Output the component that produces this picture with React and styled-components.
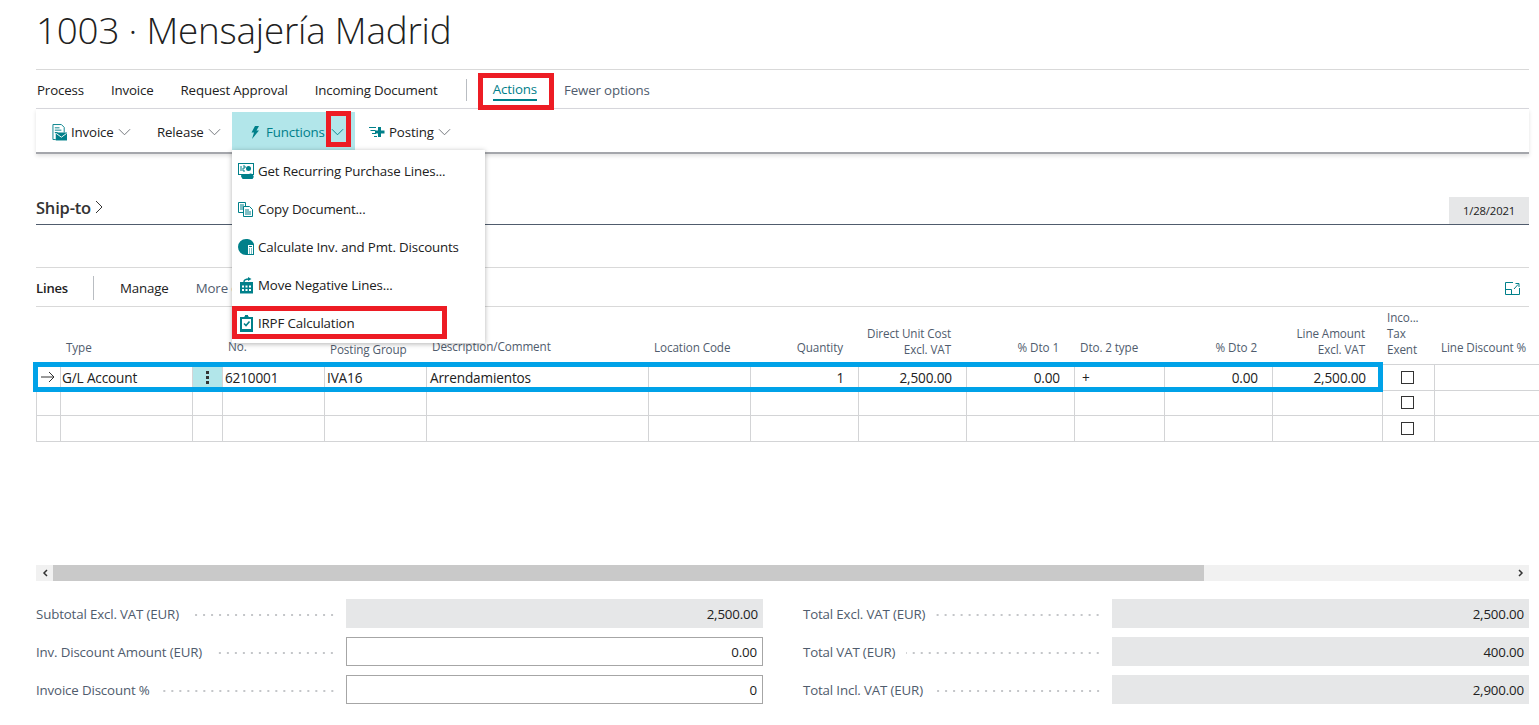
import React from "react";
import styled, { createGlobalStyle } from "styled-components";

const Global = createGlobalStyle`
  html, body { margin: 0; padding: 0; background: #fff; overflow: hidden; }
  body { font-family: "Open Sans", "Noto Sans", "Liberation Sans", sans-serif; color: #212121; }
  * { box-sizing: border-box; }
`;

const Page = styled.div`
  position: relative;
  width: 1539px;
  height: 725px;
  padding: 0 10px 0 36px;
  overflow: hidden;
  font-size: 13.3px;
  letter-spacing: -0.15px;
`;

const TitleBlock = styled.header`
  height: 70px;
  padding-top: 5px;
  border-bottom: 1px solid #d9d9d9;
`;
const Title = styled.h1`
  margin: 0;
  font-size: 36.8px;
  line-height: 50px;
  font-weight: 300;
  letter-spacing: -0.2px;
  color: #212121;
`;

const Tabs = styled.nav`
  display: flex;
  align-items: center;
  height: 39px;
  padding: 2px 0 0 1px;
  border-bottom: 1px solid #d9d9de;
`;
const Tab = styled.span`
  margin-right: ${(p) => p.$mr ?? 27}px;
  color: ${(p) => (p.$muted ? "#505c6d" : "#212121")};
`;
const TabDivider = styled.span`
  width: 1px;
  height: 22px;
  margin: 0 26px 0 0;
  background: #b9bdc2;
`;
const ActiveTab = styled.span`
  margin-right: 27px;
  color: #00808a;
  padding-bottom: 1px;
  border-bottom: 2px solid #00808a;
  line-height: 18px;
`;

const ActionBar = styled.div`
  display: flex;
  align-items: stretch;
  height: 45px;
  padding-top: 3px;
  border-bottom: 2px solid #a4a6ab;
  box-shadow: 0 2px 4px rgba(0, 0, 0, 0.12);
  position: relative;
`;
const ActionItem = styled.div`
  display: flex;
  align-items: center;
  gap: ${(p) => p.$gap || 4}px;
  width: ${(p) => p.$w}px;
  padding-left: ${(p) => p.$pl}px;
  color: ${(p) => (p.$active ? "#00808a" : "#212121")};
  background: ${(p) => (p.$active ? "#b2e6ea" : "transparent")};
`;

const SectionHead = styled.div`
  display: flex;
  justify-content: space-between;
  align-items: flex-end;
  height: 44px;
  margin-top: 27px;
  border-bottom: 1px solid #505c6d;
`;
const SectionTitle = styled.div`
  display: flex;
  align-items: center;
  gap: 4px;
  height: 32px;
  padding-bottom: 2px;
  font-size: 16.5px;
  font-weight: 600;
  letter-spacing: -0.2px;
  color: #333;
`;
const DateBox = styled.div`
  width: 80px;
  height: 27px;
  background: #e6e7e8;
  color: #212121;
  font-size: 11.3px;
  display: flex;
  align-items: center;
  justify-content: center;
`;

const LinesBar = styled.div`
  display: flex;
  align-items: center;
  height: 40px;
  margin-top: 42px;
  padding-top: 2px;
  border-top: 1px solid #d9d9d9;
  border-bottom: 1px solid #d9d9d9;
`;
const LinesTitle = styled.span`
  width: 58px;
  font-weight: 600;
  font-size: 13px;
  color: #212121;
  margin-right: 26px;
  line-height: 24px;
  border-right: 1px solid #b9bdc2;
`;
const LinesLink = styled.span`
  margin-right: 27px;
  color: ${(p) => (p.$muted ? "#505c6d" : "#212121")};
`;
const Spacer = styled.span`flex: 1;`;
const ExpandWrap = styled.span`
  display: flex;
  margin-right: 9px;
`;

const TableGrid = styled.div`
  display: grid;
  width: 1503px;
  grid-template-columns: 25px 132px 30px 102px 102px 222px 102px 108px 108px 108px 90px 108px 110px 52px 1fr;
  grid-template-rows: 57px 26px 25px 27px;
`;
const HeadCell = styled.div`
  display: flex;
  flex-direction: column;
  justify-content: flex-end;
  align-items: ${(p) => (p.$right ? "flex-end" : "flex-start")};
  text-align: ${(p) => (p.$right ? "right" : "left")};
  padding: 0 ${(p) => (p.$right ? p.$pr ?? 16 : 2)}px ${(p) => p.$pb ?? 8}px ${(p) => p.$pl ?? 4}px;
  font-size: 11.7px;
  line-height: 16px;
  letter-spacing: -0.1px;
  color: #505c6d;
  white-space: nowrap;
`;
const Cell = styled.div`
  display: flex;
  align-items: center;
  justify-content: ${(p) => (p.$right ? "flex-end" : p.$center ? "center" : "flex-start")};
  padding: 0 ${(p) => (p.$right ? p.$pr ?? 14 : 2)}px 1px ${(p) => p.$pl ?? 3}px;
  border-right: ${(p) => (p.$last ? "0" : "1px solid #d3d4d6")};
  border-top: 1px solid #d3d4d6;
  border-left: ${(p) => (p.$first ? "1px solid #d3d4d6" : "0")};
  border-bottom: ${(p) => (p.$bottom ? "1px solid #d3d4d6" : "0")};
  background: ${(p) => (p.$tint ? "#b2e6ea" : "transparent")};
  font-size: 13.6px;
  color: #212121;
`;
const Check = styled.span`
  width: 13px;
  height: 13px;
  border: 1px solid #333;
  display: block;
`;

const ScrollBar = styled.div`
  display: flex;
  align-items: center;
  height: 16px;
  margin-top: 123px;
  background: #f1f1f1;
`;
const ScrollArrow = styled.span`
  width: 17px;
  height: 16px;
  display: flex;
  align-items: center;
  justify-content: center;
`;
const ScrollThumb = styled.span`
  width: 1151px;
  height: 16px;
  background: #c9c9c9;
`;

const Totals = styled.section`
  display: grid;
  grid-template-columns: 727px 726px;
  column-gap: 40px;
  row-gap: 9px;
  margin-top: 18px;
`;
const Field = styled.div`
  display: flex;
  height: 29px;
`;
const FieldLabel = styled.div`
  width: ${(p) => p.$w}px;
  display: flex;
  align-items: center;
  color: #505c6d;
  white-space: nowrap;
  padding-right: 10px;
`;
const Dots = styled.span`
  flex: 1;
  height: 2px;
  margin: 2px 0 0 11px;
  background-image: radial-gradient(circle, #c4c6c9 0.8px, transparent 1px);
  background-size: 8px 2px;
  background-position: right;
`;
const FieldValue = styled.div`
  flex: 1;
  display: flex;
  align-items: center;
  justify-content: flex-end;
  padding-right: 5px;
  color: #212121;
  background: ${(p) => (p.$input ? "#fff" : "#e6e7e8")};
  border: ${(p) => (p.$input ? "1px solid #a6a6a6" : "0")};
`;

const Menu = styled.div`
  position: absolute;
  left: 232px;
  top: 150px;
  width: 253px;
  height: 193px;
  padding-top: 2px;
  background: #fff;
  box-shadow: 0 1px 5px rgba(0, 0, 0, 0.3);
  z-index: 3;
`;
const MenuItem = styled.div`
  display: flex;
  align-items: center;
  gap: 4px;
  height: 38px;
  padding-left: 6px;
  color: #212121;
  white-space: nowrap;
`;
const MenuIconSlot = styled.span`
  width: 16px;
  display: flex;
  justify-content: center;
`;

const Mark = styled.div`
  position: absolute;
  left: ${(p) => p.$x}px;
  top: ${(p) => p.$y}px;
  width: ${(p) => p.$w}px;
  height: ${(p) => p.$h}px;
  border: 5px solid ${(p) => (p.$blue ? "#00a2e8" : "#ed1c24")};
  z-index: 5;
  pointer-events: none;
`;

const T = "#00808a";
const IconBox = styled.svg`
  flex: none;
  display: block;
`;
const Chevron = ({ c = "#6b6f75" }) => (
  <IconBox width="13" height="8" viewBox="0 0 14 8"><path d="M1 1l6 6 6-6" fill="none" stroke={c} strokeWidth="1" /></IconBox>
);
const DocIcon = () => (
  <IconBox width="15" height="17" viewBox="0 0 16 18">
    <path d="M1 .5h9l3 3V9M1 .5v16h3" fill="none" stroke={T} />
    <path d="M3 4h5M3 6.5h7M3 9h3" stroke={T} />
    <path d="M4 9h12v8.5H4z" fill={T} />
    <path d="M4.5 10l5.5 4 5.5-4" fill="none" stroke="#fff" />
  </IconBox>
);
const BoltIcon = () => (
  <IconBox width="10" height="13" viewBox="0 0 10 13"><path d="M5 0h4L6.5 4.5H9L2 13l2-6.5H1.5z" fill={T} /></IconBox>
);
const PostIcon = () => (
  <IconBox width="16" height="12" viewBox="0 0 16 12">
    <path d="M0 1.5h7M1.5 4.5h5M3 7.5h4M5 10.5h3" stroke={T} />
    <path d="M9 1h3v3.5h3.5v3H12V11H9V7.5H6v-3h3z" fill={T} />
  </IconBox>
);
const RecurIcon = () => (
  <IconBox width="16" height="17" viewBox="0 0 16 17">
    <rect x=".5" y=".5" width="15" height="11" fill="#fff" stroke={T} />
    <path d="M3 3v5M5 3h2v2H5v3h2" stroke={T} fill="none" />
    <circle cx="10.5" cy="5.5" r="2.5" fill={T} />
    <path d="M4.5 16a3 3 0 0 1 3-4.5h3a3 3 0 0 1 4 4.5z" fill={T} />
    <circle cx="5" cy="13" r="2" fill={T} />
  </IconBox>
);
const CopyIcon = () => (
  <IconBox width="16" height="15" viewBox="0 0 16 15">
    <path d="M.5.5h7v10h-7z" fill="#fff" stroke={T} />
    <path d="M2 3h4M2 5h4M2 7h4" stroke={T} />
    <path d="M5.5 4.5h6l3 3v7h-9z" fill="#fff" stroke={T} />
    <path d="M7 8h4M7 10h6M7 12h6" stroke={T} />
  </IconBox>
);
const CalcIcon = () => (
  <IconBox width="16" height="16" viewBox="0 0 16 16">
    <path d="M8 0a8 8 0 1 0 0 16h1V5h7A8 8 0 0 0 8 0z" fill={T} />
    <rect x="9.5" y="5.5" width="6" height="10" fill="#fff" stroke={T} />
    <path d="M11 7.5h3M11 10h1M13 10h1M11 12h1M13 12h1M11 14h1M13 14h1" stroke={T} />
  </IconBox>
);
const MoveIcon = () => (
  <IconBox width="15" height="17" viewBox="0 0 15 17">
    <path d="M1 5h13v2H1z" fill={T} />
    <path d="M1 7h13v9.5H1z" fill={T} />
    <path d="M3 8.5h2v2H3zM6.5 8.5h2v2h-2zM10 8.5h2v2h-2zM3 12h2v2H3zM6.5 12h2v2h-2zM10 12h2v2h-2z" fill="#fff" />
    <path d="M5 5c0-2 2-3 5-3" fill="none" stroke={T} strokeWidth="1.4" />
    <path d="M9 0l3.5 2L9 4z" fill={T} />
  </IconBox>
);
const ClipIcon = () => (
  <IconBox width="13" height="17" viewBox="0 0 13 17">
    <path d="M0 2h13v15H0z" fill={T} />
    <path d="M2 4h9v10H2z" fill="#fff" />
    <path d="M4 1.5h5V4H4z" fill={T} />
    <path d="M5 0h3v2H5z" fill={T} />
    <path d="M4 8.5l2 2 3.5-4" fill="none" stroke={T} strokeWidth="1.6" />
  </IconBox>
);
const ExpandIcon = () => (
  <IconBox width="15" height="13" viewBox="0 0 15 13">
    <path d="M8 .5H.5v12h14V6" fill="none" stroke={T} />
    <path d="M.5 7.5h6v5" fill="none" stroke={T} />
    <path d="M9 7l4-4.5M10.5 1.5H14V5" fill="none" stroke={T} />
  </IconBox>
);

const header = [
  { k: "a", t: [] },
  { k: "type", t: ["Type"], pl: 5, pb: 9 },
  { k: "dots", t: [] },
  { k: "no", t: ["No."], pl: 5, pb: 10 },
  { k: "pg", t: ["Posting Group"], pl: 5, pb: 7 },
  { k: "desc", t: ["Description/Comment"], pl: 5, pb: 10 },
  { k: "loc", t: ["Location Code"], pl: 5, pb: 9 },
  { k: "qty", t: ["Quantity"], right: true, pb: 9 },
  { k: "cost", t: ["Direct Unit Cost", "Excl. VAT"], right: true, pb: 7 },
  { k: "d1", t: ["% Dto 1"], right: true, pb: 9 },
  { k: "d2t", t: ["Dto. 2 type"], pl: 5, pb: 9 },
  { k: "d2", t: ["% Dto 2"], right: true, pb: 9 },
  { k: "amt", t: ["Line Amount", "Excl. VAT"], right: true, pr: 18, pb: 7 },
  { k: "inc", t: ["Inco...", "Tax", "Exent"], pl: 4, pb: 7 },
  { k: "ld", t: ["Line Discount %"], pl: 6, pb: 9 },
];

const first = [
  { v: <IconBox width="14" height="12" viewBox="0 0 14 12"><path d="M0 6h13M8 1l5 5-5 5" fill="none" stroke="#333" /></IconBox>, center: true, pl: 0, first: true },
  { v: "G/L Account", pl: 1 },
  { v: <IconBox width="3" height="15" viewBox="0 0 3 15"><path d="M0 1h3v3H0zM0 6h3v3H0zM0 11h3v3H0z" fill="#333" /></IconBox>, center: true, tint: true, pl: 2 },
  { v: "6210001", pl: 2 },
  { v: "IVA16", pl: 2 },
  { v: "Arrendamientos", pl: 3 },
  { v: "" },
  { v: "1", right: true },
  { v: "2,500.00", right: true },
  { v: "0.00", right: true },
  { v: "+", pl: 7 },
  { v: "0.00", right: true },
  { v: "2,500.00", right: true, pr: 16 },
  { v: <Check />, center: true, pl: 0 },
  { v: "", last: true },
];

const Row = ({ cells, bottom }) =>
  cells.map((c, i) => (
    <Cell key={i} $right={c.right} $center={c.center} $pl={c.pl} $pr={c.pr} $tint={c.tint} $first={c.first} $last={c.last} $bottom={bottom}>
      {c.v}
    </Cell>
  ));

const emptyRow = first.map((c, i) => ({
  v: i === 13 ? <Check /> : "",
  center: i === 13,
  pl: i === 13 ? 0 : undefined,
  first: c.first,
  last: c.last,
}));

const totals = [
  ["Subtotal Excl. VAT (EUR)", "2,500.00", false, "Total Excl. VAT (EUR)", "2,500.00"],
  ["Inv. Discount Amount (EUR)", "0.00", true, "Total VAT (EUR)", "400.00"],
  ["Invoice Discount %", "0", true, "Total Incl. VAT (EUR)", "2,900.00"],
];

const menuItems = [
  [<RecurIcon key="i" />, "Get Recurring Purchase Lines..."],
  [<CopyIcon key="i" />, "Copy Document..."],
  [<CalcIcon key="i" />, "Calculate Inv. and Pmt. Discounts"],
  [<MoveIcon key="i" />, "Move Negative Lines..."],
  [<ClipIcon key="i" />, "IRPF Calculation"],
];

export default function App() {
  return (
    <Page>
      <Global />
      <TitleBlock><Title>1003 · Mensajería Madrid</Title></TitleBlock>
      <Tabs>
        <Tab>Process</Tab>
        <Tab>Invoice</Tab>
        <Tab>Request Approval</Tab>
        <Tab $mr={28}>Incoming Document</Tab>
        <TabDivider />
        <ActiveTab>Actions</ActiveTab>
        <Tab $muted>Fewer options</Tab>
      </Tabs>
      <ActionBar>
        <ActionItem $w={105} $pl={16}><DocIcon />Invoice<Chevron /></ActionItem>
        <ActionItem $w={91} $pl={16}>Release<Chevron /></ActionItem>
        <ActionItem $w={123} $pl={18} $active $gap={6}>
          <BoltIcon />
          <span>Functions</span>
          <Chevron c="#00808a" />
        </ActionItem>
        <ActionItem $w={110} $pl={14}><PostIcon />Posting<Chevron /></ActionItem>
      </ActionBar>
      <SectionHead>
        <SectionTitle>
          Ship-to
          <IconBox width="8" height="14" viewBox="0 0 8 14"><path d="M1 1l6 6-6 6" fill="none" stroke="#333" /></IconBox>
        </SectionTitle>
        <DateBox>1/28/2021</DateBox>
      </SectionHead>
      <LinesBar>
        <LinesTitle>Lines</LinesTitle>
        <LinesLink>Manage</LinesLink>
        <LinesLink $muted>More options</LinesLink>
        <Spacer />
        <ExpandWrap><ExpandIcon /></ExpandWrap>
      </LinesBar>
      <TableGrid>
        {header.map((h) => (
          <HeadCell key={h.k} $right={h.right} $pl={h.pl} $pr={h.pr} $pb={h.pb}>
            {h.t.map((l) => <span key={l}>{l}</span>)}
          </HeadCell>
        ))}
        <Row cells={first} />
        <Row cells={emptyRow} />
        <Row cells={emptyRow} bottom />
      </TableGrid>
      <ScrollBar>
        <ScrollArrow><IconBox width="6" height="8" viewBox="0 0 6 8"><path d="M5 1L2 4l3 3" fill="none" stroke="#333" strokeWidth="1.5" /></IconBox></ScrollArrow>
        <ScrollThumb />
        <Spacer />
        <ScrollArrow><IconBox width="6" height="8" viewBox="0 0 6 8"><path d="M1 1l3 3-3 3" fill="none" stroke="#333" strokeWidth="1.5" /></IconBox></ScrollArrow>
      </ScrollBar>
      <Totals>
        {totals.map((r) => (
          <React.Fragment key={r[0]}>
            <Field>
              <FieldLabel $w={310}>{r[0]}<Dots /></FieldLabel>
              <FieldValue $input={r[2]}>{r[1]}</FieldValue>
            </Field>
            <Field>
              <FieldLabel $w={309}>{r[3]}<Dots /></FieldLabel>
              <FieldValue>{r[4]}</FieldValue>
            </Field>
          </React.Fragment>
        ))}
      </Totals>
      <Menu>
        {menuItems.map(([icon, label]) => (
          <MenuItem key={label}><MenuIconSlot>{icon}</MenuIconSlot>{label}</MenuItem>
        ))}
      </Menu>
      <Mark $x={478} $y={73} $w={76} $h={37} />
      <Mark $x={326} $y={111} $w={25} $h={36} />
      <Mark $x={232} $y={306} $w={215} $h={33} />
      <Mark $x={33} $y={362} $w={1350} $h={30} $blue />
    </Page>
  );
}
